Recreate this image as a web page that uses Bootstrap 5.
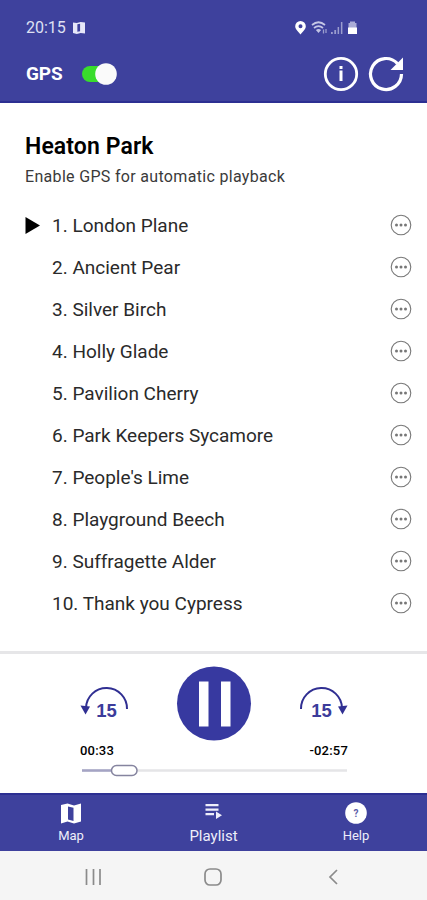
<!DOCTYPE html>
<html lang="en">
<head>
<meta charset="utf-8">
<meta name="viewport" content="width=device-width, initial-scale=1">
<title>Heaton Park</title>
<link href="https://cdn.jsdelivr.net/npm/bootstrap@5.3.0/dist/css/bootstrap.min.css" rel="stylesheet">
<style>
:root{--ink:#3e419d}
body{font-family:Roboto,"Liberation Sans",sans-serif;color:#111;background:#fff}
svg{display:block;flex:none}
.screen{width:427px;height:900px}
.brand-bg{background:var(--ink)}
.app-head{height:103px;border-bottom:2px solid #2c2f92}
.status-line{height:28px;margin-top:14px;padding:0 69px 0 26px;font-size:16px;line-height:28px;color:#dfe0f3}
.status-map{margin-left:7px}
.title-line{height:48px;margin-top:8px;padding:0 22px 0 26px}
.gps-label{font-size:19px;line-height:24px;letter-spacing:-.1px}
.toggle{width:35px;height:22px;margin-left:19px}
.tracks-area{height:548px;padding:28px 15px 0 25px}
.park-name{font-size:23px;line-height:32px;letter-spacing:.1px;color:#000;font-weight:600}
.park-hint{font-size:16px;line-height:22px;margin-top:3px;letter-spacing:.32px;color:#3a3a3a}
.track-list{margin-top:17px}
.track{height:42px;font-size:19px;line-height:42px;color:#2a2a2a}
.marker{width:27px}
.more{margin-bottom:2px}
.player{height:142px;border-top:3px solid #e6e6e8;padding:12px 79px 0 80px}
.times{font-size:13px;line-height:16px;margin-top:1px;color:#000;font-weight:500}
.time-now{letter-spacing:.2px}
.tabs{height:58px;border-top:2px solid #2c2f92;color:#eeeefa}
.tab-item{width:142px;padding-top:7px;font-size:13px;line-height:16px}
.tab-item span{margin-top:4px}
.tab-active{font-size:15px}
.sys-bar{height:49px;background:#f5f5f5;padding:2px 88px 0 84px}
.home-key{margin-right:4px}
</style>
</head>
<body>
<div class="screen d-flex flex-column overflow-hidden">
  <header class="app-head brand-bg text-white">
    <div class="status-line d-flex align-items-center">
      <span class="clock">20:15</span>
      <svg class="status-map" width="12" height="12" viewBox="0 0 22 22"><path fill="#e6e7f8" fill-rule="evenodd" d="M0 1 7 2l7-2 8 1v20l-8-1-7 2-7-2zM8 4v14l5-1V3z"/></svg>
      <svg class="ms-auto" width="64" height="16" viewBox="0 0 64 16">
        <path fill="#fff" fill-rule="evenodd" d="M6.500 1a5.300 5.300 0 0 1 5.300 5.300C11.800 9.500 8.500 12 6.500 14.500 4.500 12 1.200 9.500 1.200 6.300A5.300 5.300 0 0 1 6.500 1zm0 3.200a2 2 0 1 0 0 4 2 2 0 0 0 0-4z"/>
        <g fill="none" stroke="#c5c7e6" stroke-width="1.700"><path d="M18 5q6.500-5.500 13 0M20 8q4.500-3.800 9 0M22.500 10.700q2-1.700 4 0"/></g>
        <path fill="#c5c7e6" d="m22.500 10.500 4 0-2 2.500z"/><path d="M29.500 9.500v4M32 9v4" stroke="#9b9dce" stroke-width="1.300"/>
        <path fill="#9b9dce" d="M37 12h1.800v2H37zm3.300-2h1.800v4h-1.800zm3.300-3h1.500v7h-1.500zm3.300-5h1.500v12h-1.500z"/>
        <path fill="#aaacd7" d="M54.500 3H56V1.500h5V3h1.500v5h-8z"/><path fill="#fff" d="M54 7.500h9V14h-9z"/>
      </svg>
    </div>
    <div class="title-line d-flex align-items-center">
      <span class="gps-label fw-bold">GPS</span>
      <svg class="toggle" viewBox="0 0 35 22"><rect x="0" y="3" width="32" height="16" rx="8" fill="#39dc2c"/><circle cx="24" cy="11" r="10.800" fill="#fafafa"/></svg>
      <svg class="ms-auto" width="36" height="36" viewBox="0 0 36 36"><circle cx="18" cy="18" r="15.700" fill="none" stroke="#fff" stroke-width="2.800"/><path fill="#fff" d="M16.500 10h3v3h-3zm0 4.500h3V25h-3z"/></svg>
      <svg class="ms-2" width="38" height="38" viewBox="0 0 38 38"><path d="M34.500 19a15.500 15.500 0 1 1-4-10.400" fill="none" stroke="#fff" stroke-width="3.200"/><path fill="#fff" d="M36 2.500v12.500H23.500z"/></svg>
    </div>
  </header>

  <main class="tracks-area">
    <h1 class="park-name m-0">Heaton Park</h1>
    <p class="park-hint mb-0">Enable GPS for automatic playback</p>
    <ol class="track-list list-unstyled mb-0" id="tracks"></ol>
  </main>

  <section class="player">
    <div class="d-flex justify-content-between">
      <svg width="50" height="76" viewBox="0 0 50 76"><path d="M6 42A20.500 20.500 0 0 1 47 43" fill="none" stroke="#302f92" stroke-width="2"/><path fill="#302f92" d="M.5 39.500 10 40.500 5.500 48.500z"/><text x="26.500" y="51" text-anchor="middle" font-family="Liberation Sans, sans-serif" font-weight="700" font-size="18.500" fill="#3c3c9b">15</text></svg>
      <svg width="76" height="76" viewBox="0 0 76 76"><circle cx="38" cy="37.500" r="37" fill="#3739a0"/><path fill="#fff" d="M23 15.500h9.500v45H23zm22 0h9.500v45H45z"/></svg>
      <svg width="50" height="76" viewBox="0 0 50 76"><path d="M3 43A20.500 20.500 0 0 1 44 42" fill="none" stroke="#302f92" stroke-width="2"/><path fill="#302f92" d="M49.500 39.500 40 40.500 44.500 48.500z"/><text x="23.500" y="51" text-anchor="middle" font-family="Liberation Sans, sans-serif" font-weight="700" font-size="18.500" fill="#3c3c9b">15</text></svg>
    </div>
    <div class="times d-flex justify-content-between"><span class="time-now">00:33</span><span class="time-now">-02:57</span></div>
    <svg class="mt-1" width="268" height="16" viewBox="0 0 268 16"><path d="M2 7.500h265" stroke="#e5e5e7" stroke-width="2.500"/><path d="M2 7.500h30" stroke="#a5a4c4" stroke-width="2.500"/><rect x="31.500" y="2.500" width="25.500" height="10" rx="5" fill="#fff" stroke="#85849f" stroke-width="1.500"/></svg>
  </section>

  <nav class="tabs brand-bg d-flex justify-content-between">
    <div class="tab-item d-flex flex-column align-items-center">
      <svg width="22" height="22" viewBox="0 0 22 22"><path fill="#fff" fill-rule="evenodd" d="M1 3 7.500 1.500l6.500 2 7-2v18l-7 2-6.500-2L1 21.500zM8 4.500v13l5.500 1.500V5.700z"/></svg>
      <span>Map</span>
    </div>
    <div class="tab-item tab-active d-flex flex-column align-items-center">
      <svg width="22" height="22" viewBox="0 0 22 22"><path fill="#eeeefa" d="M2.500 2h13v2.200h-13zm0 4.500h13v2.200h-13zm0 4.500h8.500v2.200H2.500zM13 9.500l6 3.700-6 3.800z"/></svg>
      <span>Playlist</span>
    </div>
    <div class="tab-item d-flex flex-column align-items-center">
      <svg width="22" height="22" viewBox="0 0 22 22"><circle cx="11" cy="11" r="10.800" fill="#fff"/><text x="11" y="14.500" text-anchor="middle" font-size="10" font-weight="700" fill="#5b5ca8">?</text></svg>
      <span>Help</span>
    </div>
  </nav>

  <footer class="sys-bar d-flex justify-content-between align-items-center">
    <svg width="18" height="18" viewBox="0 0 18 18"><path d="M2.500 1v16M9.500 1v16M16 1v16" stroke="#8b8b8b" stroke-width="1.700"/></svg>
    <svg class="home-key" width="20" height="20" viewBox="0 0 20 20"><rect x="2" y="2" width="16" height="16" rx="5" fill="none" stroke="#8b8b8b" stroke-width="1.700"/></svg>
    <svg width="12" height="18" viewBox="0 0 12 18"><path d="M10 2 3 9l7 7" fill="none" stroke="#8b8b8b" stroke-width="1.700"/></svg>
  </footer>
</div>
<script src="https://cdn.jsdelivr.net/npm/bootstrap@5.3.0/dist/js/bootstrap.bundle.min.js"></script>
<script>
const names = ["London Plane","Ancient Pear","Silver Birch","Holly Glade","Pavilion Cherry","Park Keepers Sycamore","People's Lime","Playground Beech","Suffragette Alder","Thank you Cypress"];
const play = '<svg width="16" height="18" viewBox="0 0 16 18"><path d="M.5 0 15 8.500 .5 17z"/></svg>';
const more = '<svg class="more ms-auto" width="22" height="22" viewBox="0 0 22 22"><circle cx="11" cy="11" r="9.800" fill="none" stroke="#777" stroke-width="1.100"/><g fill="#777"><circle cx="6.500" cy="11" r="1.500"/><circle cx="11" cy="11" r="1.500"/><circle cx="15.500" cy="11" r="1.500"/></g></svg>';
document.getElementById("tracks").innerHTML = names.map((n, i) =>
  `<li class="track d-flex align-items-center"><span class="marker">${i ? "" : play}</span><span>${i + 1}. ${n}</span>${more}</li>`).join("");
</script>
</body>
</html>
